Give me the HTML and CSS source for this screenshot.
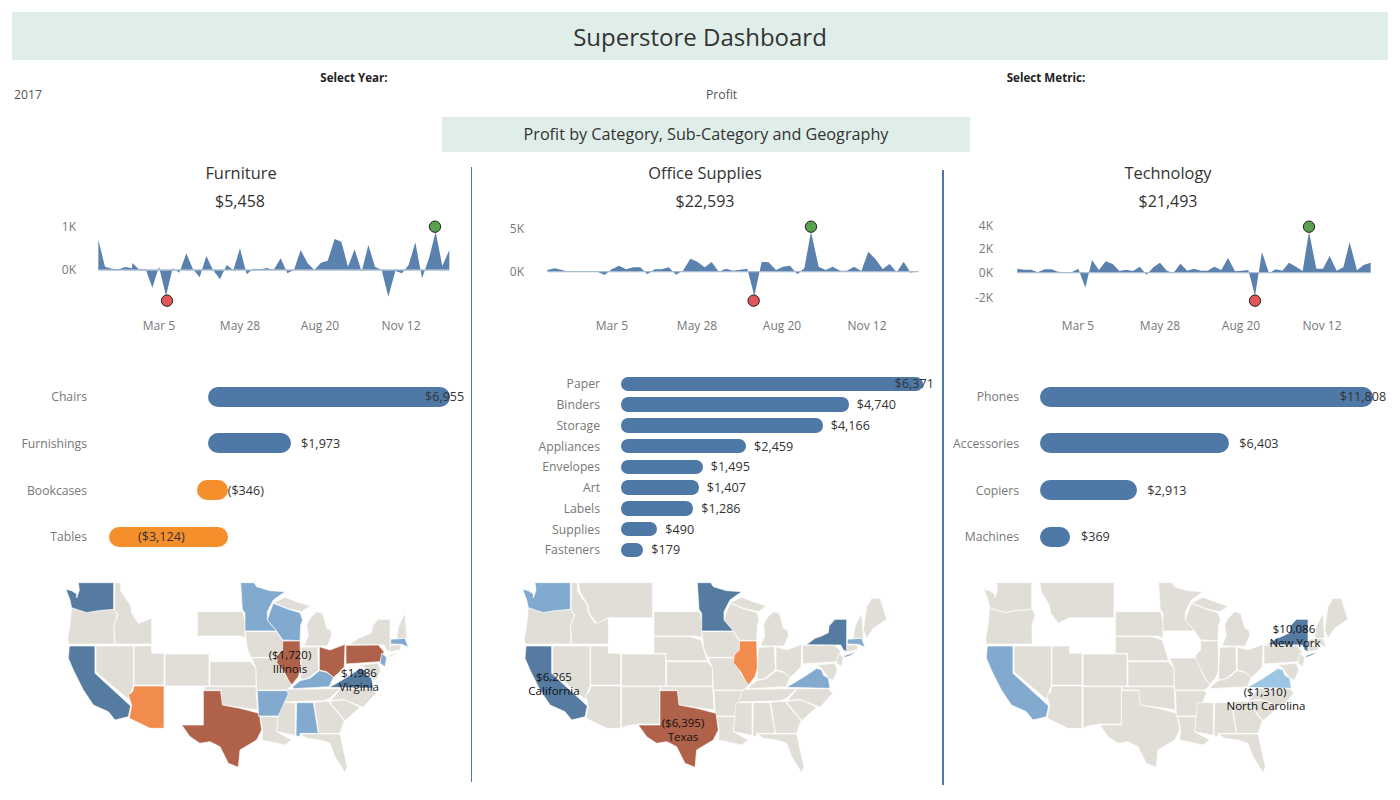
FILE: index.html
```html
<!DOCTYPE html>
<html lang="en">
<head>
<meta charset="utf-8">
<title>Superstore Dashboard</title>
<link rel="stylesheet" href="styles.css">
</head>
<body>
<svg class="defs" width="0" height="0" aria-hidden="true">
<defs>
<polygon id="wa" points="105,38 211,38 211,118 165,122 130,128 105,120 85,113 80,90 68,58 85,62 100,72 100,84 108,60"/>
<polygon id="or" points="85,113 105,120 130,128 165,122 213,118 222,135 212,165 213,222 75,222 73,205 80,165"/>
<polygon id="id" points="215,38 232,38 232,62 250,90 262,105 265,130 285,160 325,145 325,222 215,222 212,165 224,135 213,118"/>
<polygon id="mt" points="235,38 458,38 458,143 325,143 290,160 268,130 264,105 240,65"/>
<polygon id="sd" points="462,125 598,125 605,150 605,205 590,198 462,198"/>
<polygon id="ne" points="462,200 570,200 603,210 612,240 622,272 498,272 498,250 462,250"/>
<polygon id="mn" points="592,38 632,38 640,50 680,62 725,65 690,90 672,125 672,150 700,183 605,183 605,130 597,118"/>
<polygon id="ia" points="605,185 700,185 718,212 722,232 705,262 622,262 612,235"/>
<polygon id="wi" points="680,125 690,100 735,118 770,128 778,150 772,165 770,212 718,210 700,183 672,150"/>
<polygon id="il" points="718,213 770,213 772,295 765,320 745,345 735,330 722,305 700,278 703,255 718,240"/>
<polygon id="mi" points="800,145 820,125 838,130 848,165 850,175 862,180 866,195 852,228 782,228 795,195 790,165"/>
<polygon id="up" points="690,98 725,82 760,95 800,108 775,125 735,116"/>
<polygon id="in" points="775,232 823,230 826,300 795,325 772,330 772,305"/>
<polygon id="oh" points="828,230 860,240 905,223 903,290 885,310 870,322 850,305 828,300"/>
<polygon id="ky" points="748,350 770,332 800,325 828,302 850,307 870,322 858,350 750,356"/>
<polygon id="tn" points="730,358 890,356 860,385 840,392 715,396"/>
<polygon id="nc" points="892,356 985,356 998,370 960,412 930,400 900,388 862,392"/>
<polygon id="va" points="858,352 880,340 905,325 925,312 950,295 965,300 970,315 985,325 990,355"/>
<polygon id="pa" points="908,226 1005,225 1022,245 1010,275 908,282"/>
<polygon id="ny" points="922,222 945,205 960,200 985,188 987,168 1005,148 1040,148 1040,245 1030,240 1022,225 908,224"/>
<polygon id="li" points="1032,258 1070,245 1052,256 1034,262"/>
<polygon id="nj" points="1015,250 1030,262 1025,290 1010,280"/>
<polygon id="md" points="950,285 1005,280 1012,300 1000,330 985,325 965,295"/>
<polygon id="ct" points="1040,225 1072,225 1072,240 1040,245"/>
<polygon id="ma" points="1042,208 1085,205 1095,232 1075,223 1042,222"/>
<polygon id="vt" points="1060,205 1065,170 1085,130 1090,205"/>
<polygon id="me" points="1090,180 1100,110 1115,85 1140,85 1160,148 1120,175 1100,205"/>
<polygon id="ca" points="78,228 155,228 155,310 262,408 255,440 215,450 195,425 150,405 120,360 90,300 75,265"/>
<polygon id="nv" points="158,228 270,228 270,345 260,375 255,388 158,305"/>
<polygon id="ut" points="272,228 325,228 325,250 362,250 362,345 272,345"/>
<polygon id="co" points="365,252 497,252 497,348 365,348"/>
<polygon id="az" points="272,348 362,348 362,475 320,475 258,445 265,405 255,375 268,365"/>
<polygon id="nm" points="365,350 480,350 480,462 415,462 380,468 365,475"/>
<polygon id="ks" points="500,275 622,275 638,295 638,348 500,348"/>
<polygon id="ok" points="482,350 638,350 642,420 590,412 535,405 532,360 482,360"/>
<polygon id="tx" points="480,362 532,362 537,405 590,415 648,430 655,480 640,510 590,540 585,592 555,580 530,530 500,515 470,520 440,500 415,465 480,465"/>
<polygon id="mo" points="625,264 703,264 725,315 745,345 735,358 725,360 640,360 638,295"/>
<polygon id="ar" points="642,362 730,362 735,372 705,438 645,438 645,425"/>
<polygon id="la" points="650,440 705,440 700,485 745,510 725,525 680,515 655,510 658,480"/>
<polygon id="ms" points="708,398 756,398 756,496 725,490 700,485"/>
<polygon id="al" points="760,398 810,398 825,490 770,490 770,500 758,497"/>
<polygon id="ga" points="812,396 855,394 903,452 890,490 826,490"/>
<polygon id="sc" points="858,394 905,390 950,412 905,452"/>
<polygon id="fl" points="770,492 825,492 890,492 905,560 912,590 905,608 875,560 860,520 830,510 790,505"/>
</defs>
</svg>

<main class="dashboard">
  <h1 class="banner">Superstore Dashboard</h1>

  <div class="filters">
    <div class="filter">
      <div class="filter-label">Select Year:</div>
      <div class="filter-value">2017</div>
    </div>
    <div class="filter">
      <div class="filter-label">Select Metric:</div>
      <div class="filter-value">Profit</div>
    </div>
  </div>

  <h2 class="subtitle">Profit by Category, Sub-Category and Geography</h2>

  <div class="panels">
    <section class="panel panel-a">
      <div class="panel-title">Furniture</div>
      <div class="panel-value">$5,458</div>
      <svg class="chart" viewBox="0 0 459 127" width="459" height="127">
        <text class="axis" text-anchor="end" x="64" y="18">1K</text>
        <text class="axis" text-anchor="end" x="64" y="61">0K</text>
        <g transform="translate(78,-3) scale(.33333)">
          <polygon class="area" points="25,180 25,90 45,170 66,176 86,178 106,171 106,171 126,175 127,159 147,178 167,178 187,233 207,170 228,258 248,175 268,188 289,130 309,178 329,202 349,138 369,180 390,208 410,165 430,180 450,115 470,193 491,176 511,178 531,174 551,180 572,145 592,190 612,180 632,120 653,160 673,180 693,158 713,152 734,87 754,95 774,170 794,118 815,185 835,105 855,170 875,180 895,260 916,183 936,190 956,165 976,97 996,205 1017,145 1037,65 1057,168 1078,120 1078,180"/>
          <line class="zero" x1="25" y1="180" x2="1078" y2="180"/>
          <circle class="dot-low" cx="231" cy="272" r="17"/>
          <circle class="dot-high" cx="1035" cy="50" r="17"/>
        </g>
        <text class="axis" text-anchor="middle" x="147" y="117">Mar 5</text>
        <text class="axis" text-anchor="middle" x="228" y="117">May 28</text>
        <text class="axis" text-anchor="middle" x="308" y="117">Aug 20</text>
        <text class="axis" text-anchor="middle" x="389" y="117">Nov 12</text>
      </svg>
      <div class="bars bars-wide">
        <div class="row"><span class="row-label">Chairs</span><div class="track"><i class="bar" style="margin-left:99.6px;width:241.7px"></i><span class="val" style="margin-left:-25px">$6,955</span></div></div>
        <div class="row"><span class="row-label">Furnishings</span><div class="track"><i class="bar" style="margin-left:99.6px;width:82.7px"></i><span class="val" style="margin-left:10px">$1,973</span></div></div>
        <div class="row"><span class="row-label">Bookcases</span><div class="track"><i class="bar neg" style="margin-left:88.6px;width:30.4px"></i><span class="val">($346)</span></div></div>
        <div class="row"><span class="row-label">Tables</span><div class="track"><i class="bar neg" style="width:119.3px"></i><span class="val" style="margin-left:-90px">($3,124)</span></div></div>
      </div>
      <svg class="map" viewBox="0 0 459 220" width="459" height="220">
        <g class="states" transform="translate(31.33,0) scale(.33333)">
          <use href="#or"/><use href="#id"/><use href="#nv"/><use href="#ut"/><use href="#co"/><use href="#sd"/><use href="#ks"/><use href="#ok"/><use href="#ia"/><use href="#mo"/><use href="#la"/><use href="#ms"/><use href="#ga"/><use href="#sc"/><use href="#nc"/><use href="#tn"/><use href="#fl"/><use href="#in"/><use href="#mi"/><use href="#up"/><use href="#ny"/><use href="#li"/><use href="#md"/><use href="#ct"/><use href="#vt"/>
          <use href="#wa" class="dark"/><use href="#ca" class="dark"/><use href="#va" class="dark"/>
          <use href="#az" class="orange"/>
          <use href="#tx" class="red"/><use href="#il" class="red"/><use href="#oh" class="red"/><use href="#pa" class="red"/>
          <use href="#mn" class="light"/><use href="#wi" class="light"/><use href="#ky" class="light"/><use href="#ar" class="light"/><use href="#al" class="light"/><use href="#nj" class="light"/><use href="#ma" class="light"/>
        </g>
        <text class="map-label" x="278" y="89">($1,720)</text>
        <text class="map-label" x="278" y="103">Illinois</text>
        <text class="map-label" x="347" y="107">$1,986</text>
        <text class="map-label" x="347" y="121">Virginia</text>
      </svg>
    </section>

    <div class="divider divider-a"></div>

    <section class="panel panel-b">
      <div class="panel-title">Office Supplies</div>
      <div class="panel-value">$22,593</div>
      <svg class="chart" viewBox="0 0 470 127" width="470" height="127">
        <text class="axis" text-anchor="end" x="52" y="20">5K</text>
        <text class="axis" text-anchor="end" x="52" y="63">0K</text>
        <g transform="translate(68,-3) scale(.33333)">
          <polygon class="area" points="22,185 22,180 45,175 66,180 87,185 108,182 130,185 151,185 172,185 194,195 215,178 237,167 258,178 280,172 301,172 322,193 344,178 365,178 386,172 408,194 429,182 451,146 472,155 494,172 515,156 536,185 558,176 579,182 601,179 622,176 643,258 665,155 686,157 708,180 729,170 750,167 772,193 793,175 813,65 836,170 857,180 878,170 900,182 921,182 942,170 964,183 985,125 1007,148 1028,177 1049,162 1070,187 1091,155 1112,188 1135,183 1135,185"/>
          <line class="zero" x1="22" y1="185" x2="1135" y2="185"/>
          <circle class="dot-low" cx="641" cy="272" r="17"/>
          <circle class="dot-high" cx="813" cy="50" r="17"/>
        </g>
        <text class="axis" text-anchor="middle" x="140" y="117">Mar 5</text>
        <text class="axis" text-anchor="middle" x="225" y="117">May 28</text>
        <text class="axis" text-anchor="middle" x="310" y="117">Aug 20</text>
        <text class="axis" text-anchor="middle" x="395" y="117">Nov 12</text>
      </svg>
      <div class="bars bars-dense">
        <div class="row"><span class="row-label">Paper</span><div class="track"><i class="bar" style="width:302px"></i><span class="val" style="margin-left:-28px">$6,371</span></div></div>
        <div class="row"><span class="row-label">Binders</span><div class="track"><i class="bar" style="width:228px"></i><span class="val" style="margin-left:8px">$4,740</span></div></div>
        <div class="row"><span class="row-label">Storage</span><div class="track"><i class="bar" style="width:202px"></i><span class="val" style="margin-left:8px">$4,166</span></div></div>
        <div class="row"><span class="row-label">Appliances</span><div class="track"><i class="bar" style="width:125.3px"></i><span class="val" style="margin-left:8px">$2,459</span></div></div>
        <div class="row"><span class="row-label">Envelopes</span><div class="track"><i class="bar" style="width:82px"></i><span class="val" style="margin-left:8px">$1,495</span></div></div>
        <div class="row"><span class="row-label">Art</span><div class="track"><i class="bar" style="width:78px"></i><span class="val" style="margin-left:8px">$1,407</span></div></div>
        <div class="row"><span class="row-label">Labels</span><div class="track"><i class="bar" style="width:72.6px"></i><span class="val" style="margin-left:8px">$1,286</span></div></div>
        <div class="row"><span class="row-label">Supplies</span><div class="track"><i class="bar" style="width:36.6px"></i><span class="val" style="margin-left:8px">$490</span></div></div>
        <div class="row"><span class="row-label">Fasteners</span><div class="track"><i class="bar" style="width:22.6px"></i><span class="val" style="margin-left:8px">$179</span></div></div>
      </div>
      <svg class="map" viewBox="0 0 470 220" width="470" height="220">
        <g class="states" transform="translate(28,0) scale(.33333)">
          <use href="#or"/><use href="#id"/><use href="#mt"/><use href="#nv"/><use href="#ut"/><use href="#co"/><use href="#az"/><use href="#nm"/><use href="#sd"/><use href="#ne"/><use href="#ks"/><use href="#ok"/><use href="#ia"/><use href="#wi"/><use href="#mo"/><use href="#ar"/><use href="#la"/><use href="#ms"/><use href="#al"/><use href="#ga"/><use href="#sc"/><use href="#nc"/><use href="#tn"/><use href="#fl"/><use href="#in"/><use href="#oh"/><use href="#ky"/><use href="#mi"/><use href="#up"/><use href="#pa"/><use href="#nj"/><use href="#md"/><use href="#ct"/><use href="#vt"/><use href="#me"/>
          <use href="#ca" class="dark"/><use href="#mn" class="dark"/><use href="#ny" class="dark"/><use href="#li" class="dark"/>
          <use href="#wa" class="light"/><use href="#va" class="light"/><use href="#ma" class="light"/>
          <use href="#il" class="orange"/>
          <use href="#tx" class="red"/>
        </g>
        <text class="map-label" x="82" y="111">$6,265</text>
        <text class="map-label" x="82" y="125">California</text>
        <text class="map-label" x="211" y="157">($6,395)</text>
        <text class="map-label" x="211" y="171">Texas</text>
      </svg>
    </section>

    <div class="divider divider-b"></div>

    <section class="panel panel-c">
      <div class="panel-title">Technology</div>
      <div class="panel-value">$21,493</div>
      <svg class="chart" viewBox="0 0 444 127" width="444" height="127">
        <text class="axis" text-anchor="end" x="49" y="17">4K</text>
        <text class="axis" text-anchor="end" x="49" y="40">2K</text>
        <text class="axis" text-anchor="end" x="49" y="64">0K</text>
        <text class="axis" text-anchor="end" x="49" y="89">-2K</text>
        <g transform="translate(66,-3) scale(.33333)">
          <polygon class="area" points="22,188 22,176 42,179 63,179 83,187 104,178 124,178 144,185 165,187 185,187 205,176 226,233 246,150 267,180 287,154 308,162 328,183 348,179 369,183 389,170 410,194 430,172 450,158 471,183 491,188 511,161 532,182 552,176 573,182 593,182 613,170 634,180 654,144 675,184 695,182 715,180 735,258 756,126 777,190 797,178 817,182 837,158 858,170 878,183 897,65 919,176 939,176 959,138 980,182 1000,172 1019,97 1041,181 1061,165 1082,158 1082,188"/>
          <line class="zero" x1="22" y1="188" x2="1082" y2="188"/>
          <circle class="dot-low" cx="735" cy="272" r="17"/>
          <circle class="dot-high" cx="897" cy="50" r="17"/>
        </g>
        <text class="axis" text-anchor="middle" x="134" y="117">Mar 5</text>
        <text class="axis" text-anchor="middle" x="216" y="117">May 28</text>
        <text class="axis" text-anchor="middle" x="297" y="117">Aug 20</text>
        <text class="axis" text-anchor="middle" x="378" y="117">Nov 12</text>
      </svg>
      <div class="bars bars-wide bars-c">
        <div class="row"><span class="row-label">Phones</span><div class="track"><i class="bar" style="width:332.7px"></i><span class="val" style="margin-left:-33px">$11,808</span></div></div>
        <div class="row"><span class="row-label">Accessories</span><div class="track"><i class="bar" style="width:189.3px"></i><span class="val" style="margin-left:10px">$6,403</span></div></div>
        <div class="row"><span class="row-label">Copiers</span><div class="track"><i class="bar" style="width:97.3px"></i><span class="val" style="margin-left:10px">$2,913</span></div></div>
        <div class="row"><span class="row-label">Machines</span><div class="track"><i class="bar" style="width:30px"></i><span class="val" style="margin-left:11px">$369</span></div></div>
      </div>
      <svg class="map" viewBox="0 0 444 220" width="444" height="220">
        <g class="states" transform="translate(17.33,0) scale(.33333)">
          <use href="#wa"/><use href="#or"/><use href="#mt"/><use href="#nv"/><use href="#ut"/><use href="#co"/><use href="#az"/><use href="#nm"/><use href="#sd"/><use href="#ne"/><use href="#ks"/><use href="#ok"/><use href="#tx"/><use href="#mn"/><use href="#wi"/><use href="#il"/><use href="#mo"/><use href="#ar"/><use href="#la"/><use href="#ms"/><use href="#al"/><use href="#ga"/><use href="#sc"/><use href="#nc"/><use href="#fl"/><use href="#in"/><use href="#oh"/><use href="#ky"/><use href="#mi"/><use href="#up"/><use href="#pa"/><use href="#nj"/><use href="#md"/><use href="#ct"/><use href="#ma"/><use href="#vt"/><use href="#me"/>
          <use href="#ca" class="light"/>
          <use href="#ny" class="dark"/><use href="#li" class="dark"/>
          <use href="#va" class="pale"/>
        </g>
        <text class="map-label" x="350" y="63">$10,086</text>
        <text class="map-label" x="351" y="77">New York</text>
        <text class="map-label" x="321" y="126">($1,310)</text>
        <text class="map-label" x="322" y="140">North Carolina</text>
      </svg>
    </section>
  </div>
</main>
</body>
</html>
```

FILE: styles.css
```css
* { box-sizing: border-box; }
html, body { margin: 0; padding: 0; background: #fff; }
body { height: 800px; overflow: hidden; font-family: "Open Sans", "Liberation Sans", sans-serif; color: #333; }
.defs { position: absolute; }
.dashboard { padding: 12px 12px 0; display: flex; flex-direction: column; }

.banner {
  margin: 0; height: 48px; line-height: 50px; text-align: center;
  background: #e0eeea; font-size: 24px; font-weight: 400; color: #333;
}
.filters { display: flex; gap: 8px; padding-top: 8px; height: 42px; }
.filter { flex: 1; }
.filter-label { height: 18px; line-height: 20px; text-align: center; font-size: 11.6px; font-weight: 700; color: #222; }
.filter-value { height: 16px; line-height: 18px; padding-left: 2px; font-size: 12.2px; color: #555; }
.subtitle {
  align-self: flex-start; width: 528px; height: 35px; margin: 15px 0 9px 430px; line-height: 34px; text-align: center;
  background: #e0eeea; font-size: 16.2px; font-weight: 400; color: #333;
}

.panels { display: flex; align-items: flex-start; }
.panel { flex: none; display: flex; flex-direction: column; }
.panel-a { width: 459px; }
.panel-b { width: 470px; }
.panel-c { width: 444px; }
.panel-title { height: 24px; line-height: 24px; text-align: center; font-size: 16.4px; color: #333; }
.panel-a .panel-title { padding-right: 1px; }
.panel-a .panel-value { padding-right: 3px; }
.panel-b .panel-title { padding-right: 4px; }
.panel-b .panel-value { padding-right: 4px; }
.panel-c .panel-title, .panel-c .panel-value { padding-left: 4px; }
.panel-value { height: 24px; line-height: 24px; margin-top: 4px; text-align: center; font-size: 16px; color: #333; }
.chart { display: block; flex: none; }
.axis { font-size: 12px; fill: #777; font-family: "Open Sans", "Liberation Sans", sans-serif; }
.area { fill: #5b82ae; }
.zero { stroke: #a9bcd3; stroke-width: 4; }
.dot-low, .dot-high { stroke: #1c1c1c; stroke-width: 3; }
.dot-low { fill: #e15759; }
.dot-high { fill: #59a14f; }

.divider { flex: none; background: #4e79a7; height: 615px; }
.divider-a { width: 1px; margin-top: 6px; }
.divider-b { width: 2px; margin-top: 9px; }

.bars { margin-top: 33.4px; height: 196.6px; display: flex; flex-direction: column; }
.row { display: flex; align-items: center; font-size: 12.6px; }
.bars-wide .row { height: 46.67px; }
.bars-dense .row { height: 20.75px; }
.row-label { flex: none; text-align: right; color: #777; font-size: 12.2px; }
.bars-wide .row-label { width: 75px; margin-right: 21.7px; }
.bars-c .row-label { margin-right: 21px; }
.bars-dense .row-label { width: 128px; margin-right: 20.7px; }
.track { display: flex; align-items: center; flex: 1; min-width: 0; }
.bar { display: block; flex: none; background: #4e78a6; border-radius: 10px; }
.bars-wide .bar { height: 20px; }
.bars-dense .bar { height: 14.5px; border-radius: 7.25px; }
.bar.neg { background: #f58f2c; }
.val { position: relative; flex: none; white-space: nowrap; color: #333; }

.map { display: block; flex: none; }
.states use { fill: #e0ded6; stroke: #fff; stroke-width: 2; stroke-linejoin: round; }
.states use.dark { fill: #557ba1; }
.states use.light { fill: #82aace; }
.states use.pale { fill: #9cc6e4; }
.states use.red { fill: #b0614a; }
.states use.orange { fill: #f28b4e; }
.map-label { font-size: 11.5px; fill: #111; text-anchor: middle; font-family: "Open Sans", "Liberation Sans", sans-serif; }
```
